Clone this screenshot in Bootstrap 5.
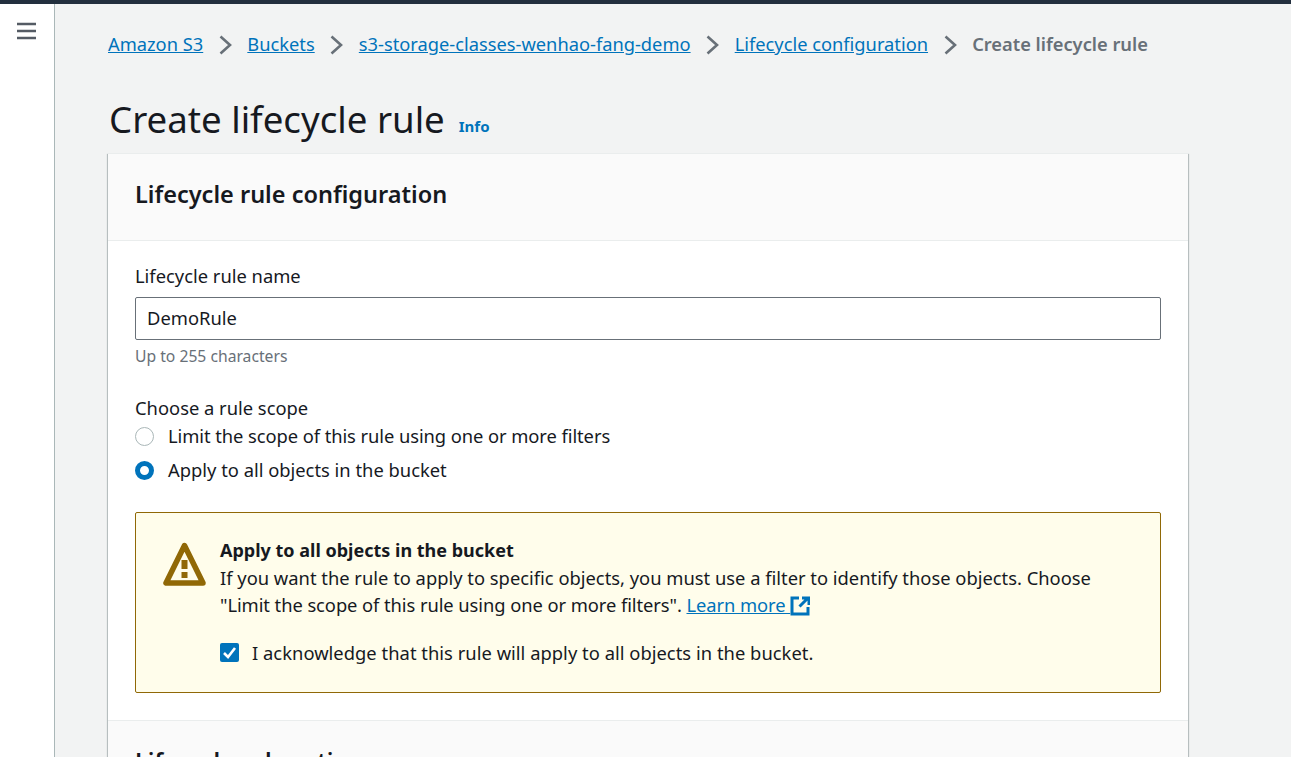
<!DOCTYPE html>
<html lang="en">
<head>
  <meta charset="UTF-8"/>
  <title>Create lifecycle rule</title>
  <meta name="viewport" content="width=device-width, initial-scale=1"/>
  <link href="https://cdn.jsdelivr.net/npm/bootstrap@5.3.0/dist/css/bootstrap.min.css" rel="stylesheet"/>
  <style>
    html,body{height:100%;overflow:hidden;}
    body{font-family:"Noto Sans",sans-serif;font-size:18.35px;line-height:24px;color:#16191f;background:#f2f3f3;border-top:4px solid #232f3e;}
    a{color:#0073bb;}
    .shell{height:753px;}
    .side-rail{width:55px;flex:none;background:#fff;border-right:1px solid #aab7b8;padding:18px 0 0 17px;}
    .main-area{padding:28px 0 0 53px;width:1133px;flex:none;}
    .crumbs{color:#687078;gap:15.55px;height:24px;font-size:18.3px;}
    .crumbs .here{font-weight:600;}
    .crumbs svg{position:relative;top:1px;}
    .page-title{font-size:36.65px;line-height:44px;font-weight:400;margin:0 0 0 1px;}
    .title-row{margin-top:38px;height:49px;margin-bottom:10px;}
    .info-link{font-size:15px;font-weight:700;text-decoration:none;margin-left:14px;position:relative;top:7px;}
    .panel{background:#fff;box-shadow:0 1px 1px 0 rgba(0,28,36,.3),1px 1px 1px 0 rgba(0,28,36,.2),-1px 1px 1px 0 rgba(0,28,36,.2);border-top:1px solid #eaeded;}
    .panel-top{background:#fafafa;border-bottom:1px solid #eaeded;padding:26px 27px 0;height:87px;}
    .panel-top h2{font-size:23.5px;line-height:28px;font-weight:600;margin:0;}
    .panel-body{padding:23px 27px 27px;}
    .fld-input{border:1px solid #687078;border-radius:2px;height:43px;padding:0 11px 2px;font-size:18.35px;color:#16191f;margin-top:9px;}
    .fld-input:focus{box-shadow:none;border-color:#687078;}
    .hint{font-size:15.7px;line-height:20px;color:#687078;margin-top:6px;}
    .scope-head{margin-top:30px;}
    .radio-line{gap:14px;height:24px;margin-top:4px;}
    .radio-line + .radio-line{margin-top:10px;}
    .radio-off{width:19px;height:19px;border:1.5px solid #aab7b8;border-radius:50%;background:#fff;flex:none;}
    .radio-on{width:19px;height:19px;border:5.5px solid #0073bb;border-radius:50%;background:#fff;flex:none;}
    .tight-text{letter-spacing:-.07px;}
    .wide-text{letter-spacing:.03px;}
    .warn-box{margin-top:30px;background:#fffdeb;border:1px solid #906806;border-radius:2px;height:181px;padding:24px 27px 0;gap:14px;line-height:27px;}
    .warn-icon{margin-top:5px;}
    .warn-title{font-weight:700;font-size:18px;}
    .ack-line{gap:13px;margin-top:21px;}
    .check-on{width:19px;height:19px;background:#0073bb;border-radius:2px;flex:none;}
    .ext-icon{vertical-align:-4px;}
    .next-top{background:#fafafa;border-top:1px solid #eaeded;padding:26px 27px 0;height:60px;}
    .next-top h2{font-size:23.5px;line-height:28px;font-weight:600;margin:0;}
  </style>
</head>
<body>
<div class="shell d-flex">
  <div class="side-rail">
    <svg width="20" height="18" viewBox="0 0 20 18" class="d-block"><path d="M0 2h19M0 9h19M0 16h19" stroke="#545b64" stroke-width="2.6" fill="none"/></svg>
  </div>
  <div class="main-area">
    <nav class="crumbs d-flex align-items-center">
      <a href="#">Amazon S3</a>
      <svg width="13" height="20" viewBox="0 0 13 20"><path d="M1.5 1.5l9.5 8.5-9.5 8.5" stroke="#687078" stroke-width="2.6" fill="none"/></svg>
      <a href="#">Buckets</a>
      <svg width="13" height="20" viewBox="0 0 13 20"><path d="M1.5 1.5l9.5 8.5-9.5 8.5" stroke="#687078" stroke-width="2.6" fill="none"/></svg>
      <a href="#">s3-storage-classes-wenhao-fang-demo</a>
      <svg width="13" height="20" viewBox="0 0 13 20"><path d="M1.5 1.5l9.5 8.5-9.5 8.5" stroke="#687078" stroke-width="2.6" fill="none"/></svg>
      <a href="#">Lifecycle configuration</a>
      <svg width="13" height="20" viewBox="0 0 13 20"><path d="M1.5 1.5l9.5 8.5-9.5 8.5" stroke="#687078" stroke-width="2.6" fill="none"/></svg>
      <span class="here">Create lifecycle rule</span>
    </nav>
    <div class="title-row d-flex align-items-center">
      <h1 class="page-title">Create lifecycle rule</h1>
      <a href="#" class="info-link">Info</a>
    </div>
    <div class="panel">
      <div class="panel-top"><h2>Lifecycle rule configuration</h2></div>
      <div class="panel-body">
        <div>Lifecycle rule name</div>
        <input class="form-control fld-input" type="text" value="DemoRule"/>
        <div class="hint">Up to 255 characters</div>
        <div class="scope-head">Choose a rule scope</div>
        <div class="radio-line d-flex align-items-center"><span class="radio-off"></span><span class="tight-text">Limit the scope of this rule using one or more filters</span></div>
        <div class="radio-line d-flex align-items-center"><span class="radio-on"></span><span>Apply to all objects in the bucket</span></div>
        <div class="warn-box d-flex">
          <svg width="43" height="44" viewBox="0 0 43 44" class="flex-shrink-0 warn-icon"><path d="M21.5 3.5L3 41h37z" fill="none" stroke="#906806" stroke-width="5.5" stroke-linejoin="round"/><path d="M18.5 18h6v9h-6zM18.5 30h6v6h-6z" fill="#906806"/></svg>
          <div>
            <div class="warn-title">Apply to all objects in the bucket</div>
            <div>If you want the rule to apply to specific objects, you must use a filter to identify those objects. Choose<br/><span class="tight-text">"Limit the scope of this rule using one or more filters". <a href="#">Learn more <svg width="20" height="20" viewBox="0 0 20 20" class="ext-icon"><path d="M9 2H2v16h16v-7M12 2h7v7M18 2l-8.5 8.5" fill="none" stroke="#0073bb" stroke-width="3"/></svg></a></span></div>
            <div class="ack-line d-flex align-items-center">
              <span class="check-on"><svg width="19" height="19" viewBox="0 0 19 19" class="d-block"><path d="M4 10l4 4 7-9" fill="none" stroke="#fff" stroke-width="2.6"/></svg></span>
              <span class="wide-text">I acknowledge that this rule will apply to all objects in the bucket.</span>
            </div>
          </div>
        </div>
      </div>
      <div class="next-top"><h2>Lifecycle rule actions</h2></div>
    </div>
  </div>
</div>
<script src="https://cdn.jsdelivr.net/npm/bootstrap@5.3.0/dist/js/bootstrap.bundle.min.js"></script>
</body>
</html>
